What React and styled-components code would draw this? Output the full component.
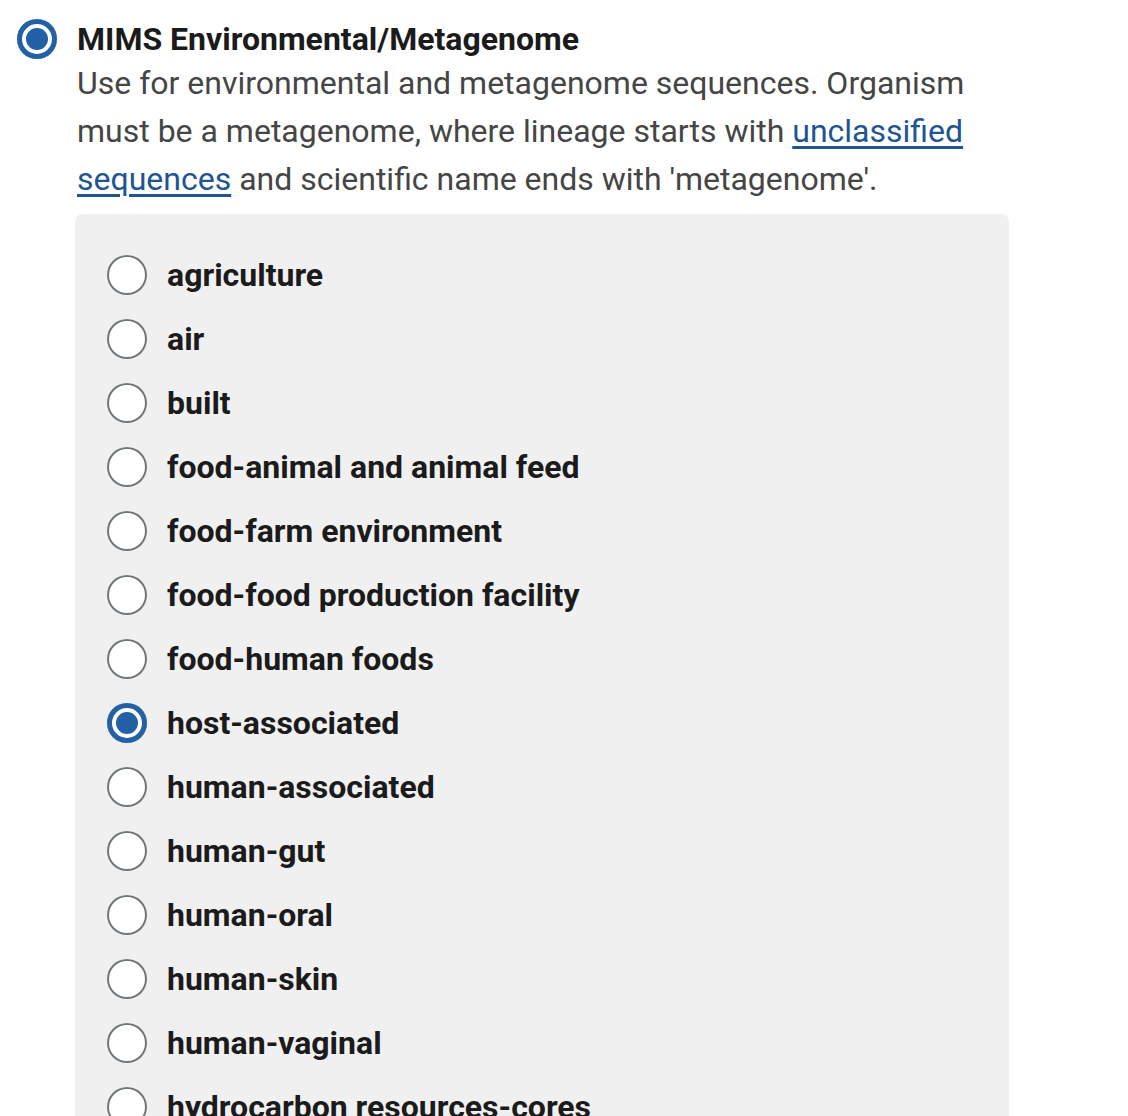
import React from 'react';
import styled, { createGlobalStyle } from 'styled-components';

const GlobalStyle = createGlobalStyle`
  body {
    margin: 0;
    background: #ffffff;
    font-family: Roboto, "Liberation Sans", sans-serif;
  }
`;

const options = [
  'agriculture',
  'air',
  'built',
  'food-animal and animal feed',
  'food-farm environment',
  'food-food production facility',
  'food-human foods',
  'host-associated',
  'human-associated',
  'human-gut',
  'human-oral',
  'human-skin',
  'human-vaginal',
  'hydrocarbon resources-cores',
  'hydrocarbon resources-fluids/swabs',
];

function App() {
  return (
    <>
      <GlobalStyle />
      <Page>
        <Choice>
          <Radio checked />
          <ChoiceBody>
            <Title>MIMS Environmental/Metagenome</Title>
            <Description>
              Use for environmental and metagenome sequences. Organism must be a
              metagenome, where lineage starts with{' '}
              <Link href="#">unclassified sequences</Link> and scientific name ends
              with 'metagenome'.
            </Description>
            <Panel>
              {options.map(option => (
                <OptionRow key={option}>
                  <Radio checked={option === 'host-associated'} />
                  <OptionLabel>{option}</OptionLabel>
                </OptionRow>
              ))}
            </Panel>
          </ChoiceBody>
        </Choice>
      </Page>
    </>
  );
}

const Page = styled.div`
  padding: 19px 0 0 17px;
  width: 1000px;
`;

const Choice = styled.div`
  display: flex;
  align-items: flex-start;
  gap: 20px;
`;

const Radio = styled.span`
  flex: none;
  box-sizing: border-box;
  width: 40px;
  height: 40px;
  border-radius: 50%;
  background: ${p => (p.checked ? '#2360a5' : '#ffffff')};
  box-shadow: ${p =>
    p.checked
      ? 'inset 0 0 0 5px #2360a5, inset 0 0 0 9px #ffffff'
      : 'inset 0 0 0 2px #71767a'};
`;

const ChoiceBody = styled.div`
  display: flex;
  flex-direction: column;
`;

const Title = styled.div`
  font-size: 32px;
  font-weight: 700;
  color: #1b1b1b;
  line-height: 40px;
`;

const Description = styled.p`
  margin: 0;
  width: 900px;
  font-size: 32px;
  line-height: 48px;
  color: #454545;
`;

const Link = styled.a`
  color: #205493;
  text-decoration: underline;
  text-underline-offset: 4px;
`;

const Panel = styled.div`
  margin: 11px 0 0 -2px;
  width: 934px;
  box-sizing: border-box;
  background: #f0f0f0;
  border-radius: 8px;
  padding: 29px 32px;
`;

const OptionRow = styled.div`
  display: flex;
  align-items: center;
  gap: 20px;
  height: 64px;
`;

const OptionLabel = styled.span`
  font-size: 32px;
  font-weight: 700;
  color: #1b1b1b;
`;

export default App;
